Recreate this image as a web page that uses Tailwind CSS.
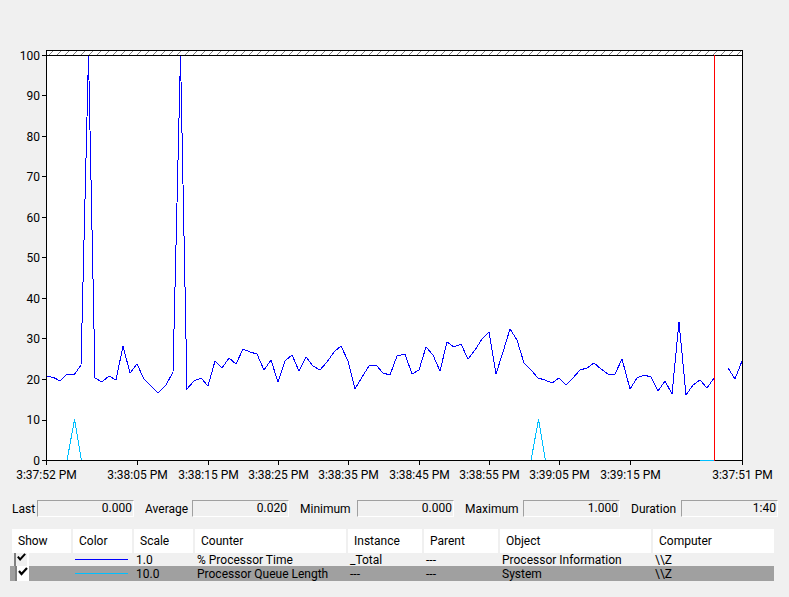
<!DOCTYPE html>
<html lang="en">
<head>
<meta charset="UTF-8">
<title>Performance Monitor</title>
<script src="https://cdn.jsdelivr.net/npm/@tailwindcss/browser@4"></script>
</head>
<body class="bg-[#f0f0f0] text-black w-[789px] h-[597px] overflow-hidden font-['Roboto',sans-serif] text-[12px] leading-none">
    <!-- Graph -->
    <svg class="block" width="789" height="490" viewBox="0 0 789 490" font-size="12" fill="#000">
        <defs>
            <pattern id="hatch" width="8" height="5" patternUnits="userSpaceOnUse">
                <path d="M1 5 L6 0" stroke="#808080" stroke-width="1" fill="none"/>
            </pattern>
        </defs>
        <rect x="46" y="50" width="697" height="411" fill="#fff"/>
        <rect x="46" y="51" width="697" height="4" fill="url(#hatch)"/>

        <g shape-rendering="crispEdges" fill="none" stroke-width="1">
            <polyline stroke="#00bfff" points="67,460.5 74.5,419.5 81.5,460.5"/>
            <polyline stroke="#00bfff" points="531,460.5 538.5,419.5 545.5,460.5"/>
            <polyline stroke="#0000ff" points="46,376 53.7,377.5 60,381 67,374 74.7,374 81,365 88.5,55 95,378 102,382 109,376 116,380 123,346 130,373 137,364 144,379 151,386 158,393 166,385 173,372 180.5,55 187,389 194,381 201,378 208,386 215,361 222,368 229,358 236,364 243,349 250,352 257,354 264,370 271,360 278,382 285,361 292,355 299,371 306,357 313,366 320,370 327,362 334,352 341,346 348,361 355,389 362,377 369,366 376,365 383,373 390,375 397,356 405,354 412,374 419,370 426,347 433,355 440,371 447,342 454,347 461,344 468,359 475,350 482,339 489,332 496,374 503,352 510,329 517,340 524,363 531,370 538,378 545,380 552,383 559,378 566,385 573,378 580,370 587,368 594,363 601,369 608,374 615,374 622,359 630,389 637,378 644,375 651,377 658,391 665,381 672,394 679,322 686,395 693,385 700,380 707,388 714,378"/>
            <polyline stroke="#0000ff" points="728,368 735,379 742,361"/>
        </g>
        <g shape-rendering="crispEdges" fill="none">
            <path stroke="#000" d="M46 50.5H743M46 55.5H743M46.5 50V461M742.5 50V461M46 460.5H743"/>
            <path stroke="#000" d="M42 55.5H46M42 95.5H46M42 136.5H46M42 176.5H46M42 217.5H46M42 257.5H46M42 298.5H46M42 338.5H46M42 379.5H46M42 420.5H46M42 460.5H46"/>
            <path stroke="#000" d="M46.5 461V465M137.5 461V465M208.5 461V465M278.5 461V465M348.5 461V465M419.5 461V465M489.5 461V465M559.5 461V465M630.5 461V465M742.5 461V465"/>
            <path stroke="#00bfff" d="M700 460.5H714"/>
            <path stroke="#ff0000" d="M714.5 55V461"/>
        </g>

        <g text-anchor="end">
            <text x="40" y="60">100</text>
            <text x="40" y="100">90</text>
            <text x="40" y="141">80</text>
            <text x="40" y="181">70</text>
            <text x="40" y="222">60</text>
            <text x="40" y="262">50</text>
            <text x="40" y="303">40</text>
            <text x="40" y="343">30</text>
            <text x="40" y="384">20</text>
            <text x="40" y="424">10</text>
            <text x="40" y="465">0</text>
        </g>
        <g text-anchor="middle">
            <text x="46.5" y="479">3:37:52 PM</text>
            <text x="137.5" y="479">3:38:05 PM</text>
            <text x="208.5" y="479">3:38:15 PM</text>
            <text x="278.5" y="479">3:38:25 PM</text>
            <text x="348.5" y="479">3:38:35 PM</text>
            <text x="419.5" y="479">3:38:45 PM</text>
            <text x="489.5" y="479">3:38:55 PM</text>
            <text x="559.5" y="479">3:39:05 PM</text>
            <text x="630.5" y="479">3:39:15 PM</text>
            <text x="742.5" y="479">3:37:51 PM</text>
        </g>
    </svg>

    <!-- Value bar -->
    <div class="flex items-center h-[16px] mt-[10px] ml-[12px]">
        <span class="w-[25px] pt-px">Last</span>
        <div class="w-[97px] h-[17px] border border-t-[#a0a0a0] border-l-[#a0a0a0] border-r-white border-b-white flex items-center justify-end pr-[1px]">0.000</div>
        <span class="w-[47px] ml-[11px] pt-px">Average</span>
        <div class="w-[97px] h-[17px] border border-t-[#a0a0a0] border-l-[#a0a0a0] border-r-white border-b-white flex items-center justify-end pr-[1px]">0.020</div>
        <span class="w-[57px] ml-[11px] pt-px">Minimum</span>
        <div class="w-[97px] h-[17px] border border-t-[#a0a0a0] border-l-[#a0a0a0] border-r-white border-b-white flex items-center justify-end pr-[1px]">0.000</div>
        <span class="w-[58px] ml-[11px] pt-px">Maximum</span>
        <div class="w-[97px] h-[17px] border border-t-[#a0a0a0] border-l-[#a0a0a0] border-r-white border-b-white flex items-center justify-end pr-[1px]">1.000</div>
        <span class="w-[50px] ml-[11px] pt-px">Duration</span>
        <div class="w-[97px] h-[17px] border border-t-[#a0a0a0] border-l-[#a0a0a0] border-r-white border-b-white flex items-center justify-end pr-[1px]">1:40</div>
    </div>

    <!-- Counter list -->
    <div class="mt-[13px] ml-[10px] w-[766px]">
        <div class="grid grid-cols-[61px_61px_61px_153px_76px_76px_153px_123px] h-[24px] ml-[2px] bg-white items-center">
            <span class="pl-[6px] h-full flex items-center border-r-2 border-[#f0f0f0]">Show</span>
            <span class="pl-[6px] h-full flex items-center border-r-2 border-[#f0f0f0]">Color</span>
            <span class="pl-[6px] h-full flex items-center border-r-2 border-[#f0f0f0]">Scale</span>
            <span class="pl-[6px] h-full flex items-center border-r-2 border-[#f0f0f0]">Counter</span>
            <span class="pl-[6px] h-full flex items-center border-r-2 border-[#f0f0f0]">Instance</span>
            <span class="pl-[6px] h-full flex items-center border-r-2 border-[#f0f0f0]">Parent</span>
            <span class="pl-[6px] h-full flex items-center border-r-2 border-[#f0f0f0]">Object</span>
            <span class="pl-[6px] h-full flex items-center border-r-2 border-[#f0f0f0]">Computer</span>
        </div>
        <div class="grid grid-cols-[65px_61px_61px_153px_76px_76px_153px_121px] h-[13px] pb-[2px] items-center">
            <span class="self-start h-[13px] ml-[4px] w-[15px] border-l-2 border-[#808080] border-r-2 border-r-white flex items-start justify-center">
                <svg width="12" height="11" viewBox="0 0 12 11"><path d="M2 3.5 L4.5 6.5 L10 0.5" stroke="#000" stroke-width="2.2" fill="none"/></svg>
            </span>
            <span class="h-px w-[53px] bg-[#0000ff]"></span>
            <span>1.0</span>
            <span>% Processor Time</span>
            <span>_Total</span>
            <span>---</span>
            <span>Processor Information</span>
            <span>\\Z</span>
        </div>
        <div class="grid grid-cols-[65px_61px_61px_153px_76px_76px_153px_110px] h-[15px] items-center bg-[#a0a0a0] w-[764px]">
            <span class="h-[15px] ml-[5px] w-[14px] border-l-2 border-[#808080] bg-white flex items-start justify-center">
                <svg width="12" height="13" viewBox="0 0 12 13"><path d="M2 5 L4.5 8 L10 2" stroke="#000" stroke-width="2.2" fill="none"/></svg>
            </span>
            <span class="h-px w-[53px] bg-[#00bfff]"></span>
            <span>10.0</span>
            <span>Processor Queue Length</span>
            <span>---</span>
            <span>---</span>
            <span>System</span>
            <span>\\Z</span>
        </div>
    </div>
</body>
</html>
